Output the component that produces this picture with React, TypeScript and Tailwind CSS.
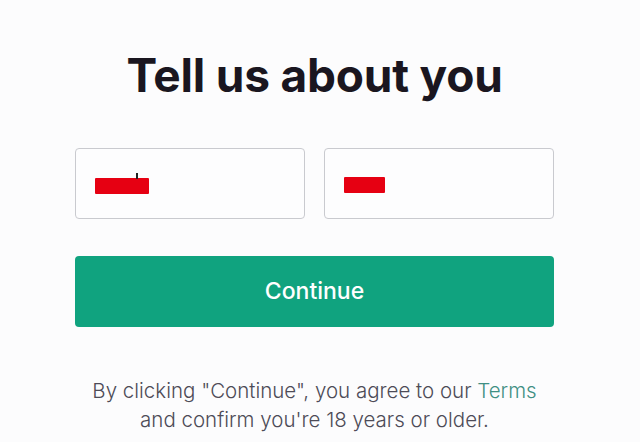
export default function App() {
  return (
    <div
      className="min-h-[442px] w-[640px] bg-[#fcfcfd] overflow-hidden"
      style={{ fontFamily: 'Inter, "Noto Sans", sans-serif' }}
    >
      <div className="ml-[75px] w-[479px] flex flex-col items-center pt-[47px]">
        <h1 className="text-[46px] leading-[56px] font-bold text-[#1a1620] tracking-[-0.2px]">
          Tell us about you
        </h1>

        <div className="mt-[45px] w-full grid grid-cols-2 gap-[19px]">
          <div className="relative h-[71px] rounded-[4px] border border-[#c9cacf] bg-[#fdfdfe]">
            <div className="absolute left-[19px] top-[29px] h-[16px] w-[54px] rounded-[1px] bg-[#e60012]" />
            <div className="absolute left-[60px] top-[24px] h-[6px] w-[2px] bg-[#222]" />
          </div>
          <div className="relative h-[71px] rounded-[4px] border border-[#c9cacf] bg-[#fdfdfe]">
            <div className="absolute left-[19px] top-[28px] h-[16px] w-[41px] rounded-[1px] bg-[#e60012]" />
          </div>
        </div>

        <button className="mt-[37px] w-full h-[71px] rounded-[4px] bg-[#10a37f] text-white text-[23px] font-medium">
          Continue
        </button>

        <p className="mt-[49px] text-center text-[20.5px] leading-[29px] text-[#4d4b57] font-light">
          By clicking "Continue", you agree to our{' '}
          <span className="text-[#3f8f83]">Terms</span>
          <br />
          and confirm you're 18 years or older.
        </p>
      </div>
    </div>
  );
}
